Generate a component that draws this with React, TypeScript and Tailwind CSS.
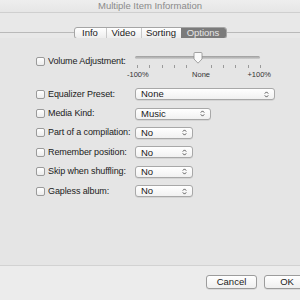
import React from "react";

const font = { fontFamily: '"Lucida Grande", "Liberation Sans", Arial, sans-serif' };

const Checkbox: React.FC = () => (
  <div className="w-[9px] h-[9px] rounded-[2px] border border-[#9a9a9a] bg-gradient-to-b from-white to-[#ececec] shrink-0" />
);

const Arrows: React.FC = () => (
  <svg width="5" height="7" viewBox="0 0 5 7" className="shrink-0">
    <path d="M0.8 2.6 L2.5 0.9 L4.2 2.6" fill="none" stroke="#444" strokeWidth="0.9" />
    <path d="M0.8 4.4 L2.5 6.1 L4.2 4.4" fill="none" stroke="#444" strokeWidth="0.9" />
  </svg>
);

const Select: React.FC<{ value: string; width: string }> = ({ value, width }) => (
  <div
    className={`${width} h-[12px] rounded-[3px] border border-[#a8a8a8] bg-gradient-to-b from-white to-[#f1f1f1] flex items-center justify-between pl-[5px] pr-[5px] text-[9.5px] text-[#1a1a1a] shadow-[0_0.5px_0.5px_rgba(0,0,0,0.15)]`}
  >
    <span className="leading-none">{value}</span>
    <Arrows />
  </div>
);

const rows = [
  { label: "Equalizer Preset:", value: "None", width: "w-[140px]" },
  { label: "Media Kind:", value: "Music", width: "w-[76px]" },
  { label: "Part of a compilation:", value: "No", width: "w-[58px]" },
  { label: "Remember position:", value: "No", width: "w-[58px]" },
  { label: "Skip when shuffling:", value: "No", width: "w-[58px]" },
  { label: "Gapless album:", value: "No", width: "w-[58px]" },
];

const tabs = ["Info", "Video", "Sorting", "Options"];

const App: React.FC = () => {
  return (
    <div className="w-[300px] h-[300px] bg-[#e8e8e8] flex flex-col overflow-hidden" style={font}>
      {/* title bar */}
      <div className="h-[13px] bg-gradient-to-b from-[#eeeeee] to-[#e6e6e6] border-b border-[#cfcfcf] flex items-center justify-center">
        <span className="text-[9.5px] text-[#8a8a8a] leading-none">Multiple Item Information</span>
      </div>

      {/* tabs */}
      <div className="mt-[14px] h-[11px] flex items-center">
        <div className="flex-1 h-px bg-[#b9b9b9]" />
        <div className="flex h-[12px] rounded-[3px] border border-[#a5a5a5] overflow-hidden text-[9.5px] leading-none bg-gradient-to-b from-white to-[#ededed]">
          {tabs.map((t, i) => (
            <div
              key={t}
              className={
                t === "Options"
                  ? "w-[45px] flex items-center justify-center bg-[#7b7b7b] text-[#e6e6e6]"
                  : `flex items-center justify-center text-[#1a1a1a] ${i > 0 ? "border-l border-[#c8c8c8]" : ""} ${
                      i === 0 ? "w-[31px]" : i === 1 ? "w-[35px]" : "w-[40px]"
                    }`
              }
            >
              {t}
            </div>
          ))}
        </div>
        <div className="flex-1 h-px bg-[#b9b9b9]" />
      </div>

      {/* group content */}
      <div className="flex-1 bg-[#e5e5e5] flex flex-col">
        {/* volume */}
        <div className="mt-[14px] flex pl-[36px]">
          <div className="w-[99px] flex items-center gap-[3px] h-[9px] mt-[5px]">
            <Checkbox />
            <span className="text-[9px] tracking-[-0.1px] text-[#1a1a1a] leading-none whitespace-nowrap">Volume Adjustment:</span>
          </div>
          <div className="w-[128px] flex flex-col">
            <div className="relative h-[12px]">
              <div className="absolute left-0 right-[3px] top-[4px] h-[3px] rounded-full bg-gradient-to-b from-[#9c9c9c] to-[#d0d0d0]" />
              <svg className="absolute left-[58px] top-0" width="10" height="12" viewBox="0 0 10 12">
                <path d="M1 1.5 Q1 0.5 2 0.5 H8 Q9 0.5 9 1.5 V7 L5 11.2 L1 7 Z" fill="#fafafa" stroke="#8e8e8e" strokeWidth="0.8" />
              </svg>
            </div>
            <div className="flex justify-between px-[2px] h-[4px] mt-[1px]">
              {Array.from({ length: 11 }).map((_, i) => (
                <div key={i} className={`w-px h-[3px] ${i === 5 ? "bg-transparent" : "bg-[#9a9a9a]"}`} />
              ))}
            </div>
            <div className="flex justify-between text-[7.5px] text-[#333] leading-none mt-[2px] -mx-[8px]">
              <span>-100%</span>
              <span className="ml-[6px]">None</span>
              <span>+100%</span>
            </div>
          </div>
        </div>

        {/* select rows */}
        <div className="mt-[6px] flex flex-col pl-[36px]">
          {rows.map((r) => (
            <div key={r.label} className="h-[19.4px] flex items-center">
              <div className="w-[99px] flex items-center gap-[3px]">
                <Checkbox />
                <span className="text-[9px] tracking-[-0.1px] text-[#1a1a1a] leading-none whitespace-nowrap">{r.label}</span>
              </div>
              <Select value={r.value} width={r.width} />
            </div>
          ))}
        </div>
        <div className="flex-1" />
      </div>

      {/* bottom bar */}
      <div className="h-[35px] border-t border-[#d2d2d2] bg-[#ececec] flex items-start justify-end gap-[7px] pt-[9px] -mr-[10px]">
        <div className="w-[51px] h-[14px] rounded-[3px] border border-[#9c9c9c] bg-gradient-to-b from-white to-[#efefef] flex items-center justify-center text-[9.5px] text-[#1a1a1a] leading-none shadow-[0_0.5px_0.5px_rgba(0,0,0,0.15)]">
          Cancel
        </div>
        <div className="w-[46px] h-[14px] rounded-[3px] border border-[#9c9c9c] bg-gradient-to-b from-white to-[#efefef] flex items-center justify-center text-[9.5px] text-[#1a1a1a] leading-none shadow-[0_0.5px_0.5px_rgba(0,0,0,0.15)]">
          OK
        </div>
      </div>
    </div>
  );
};

export default App;
